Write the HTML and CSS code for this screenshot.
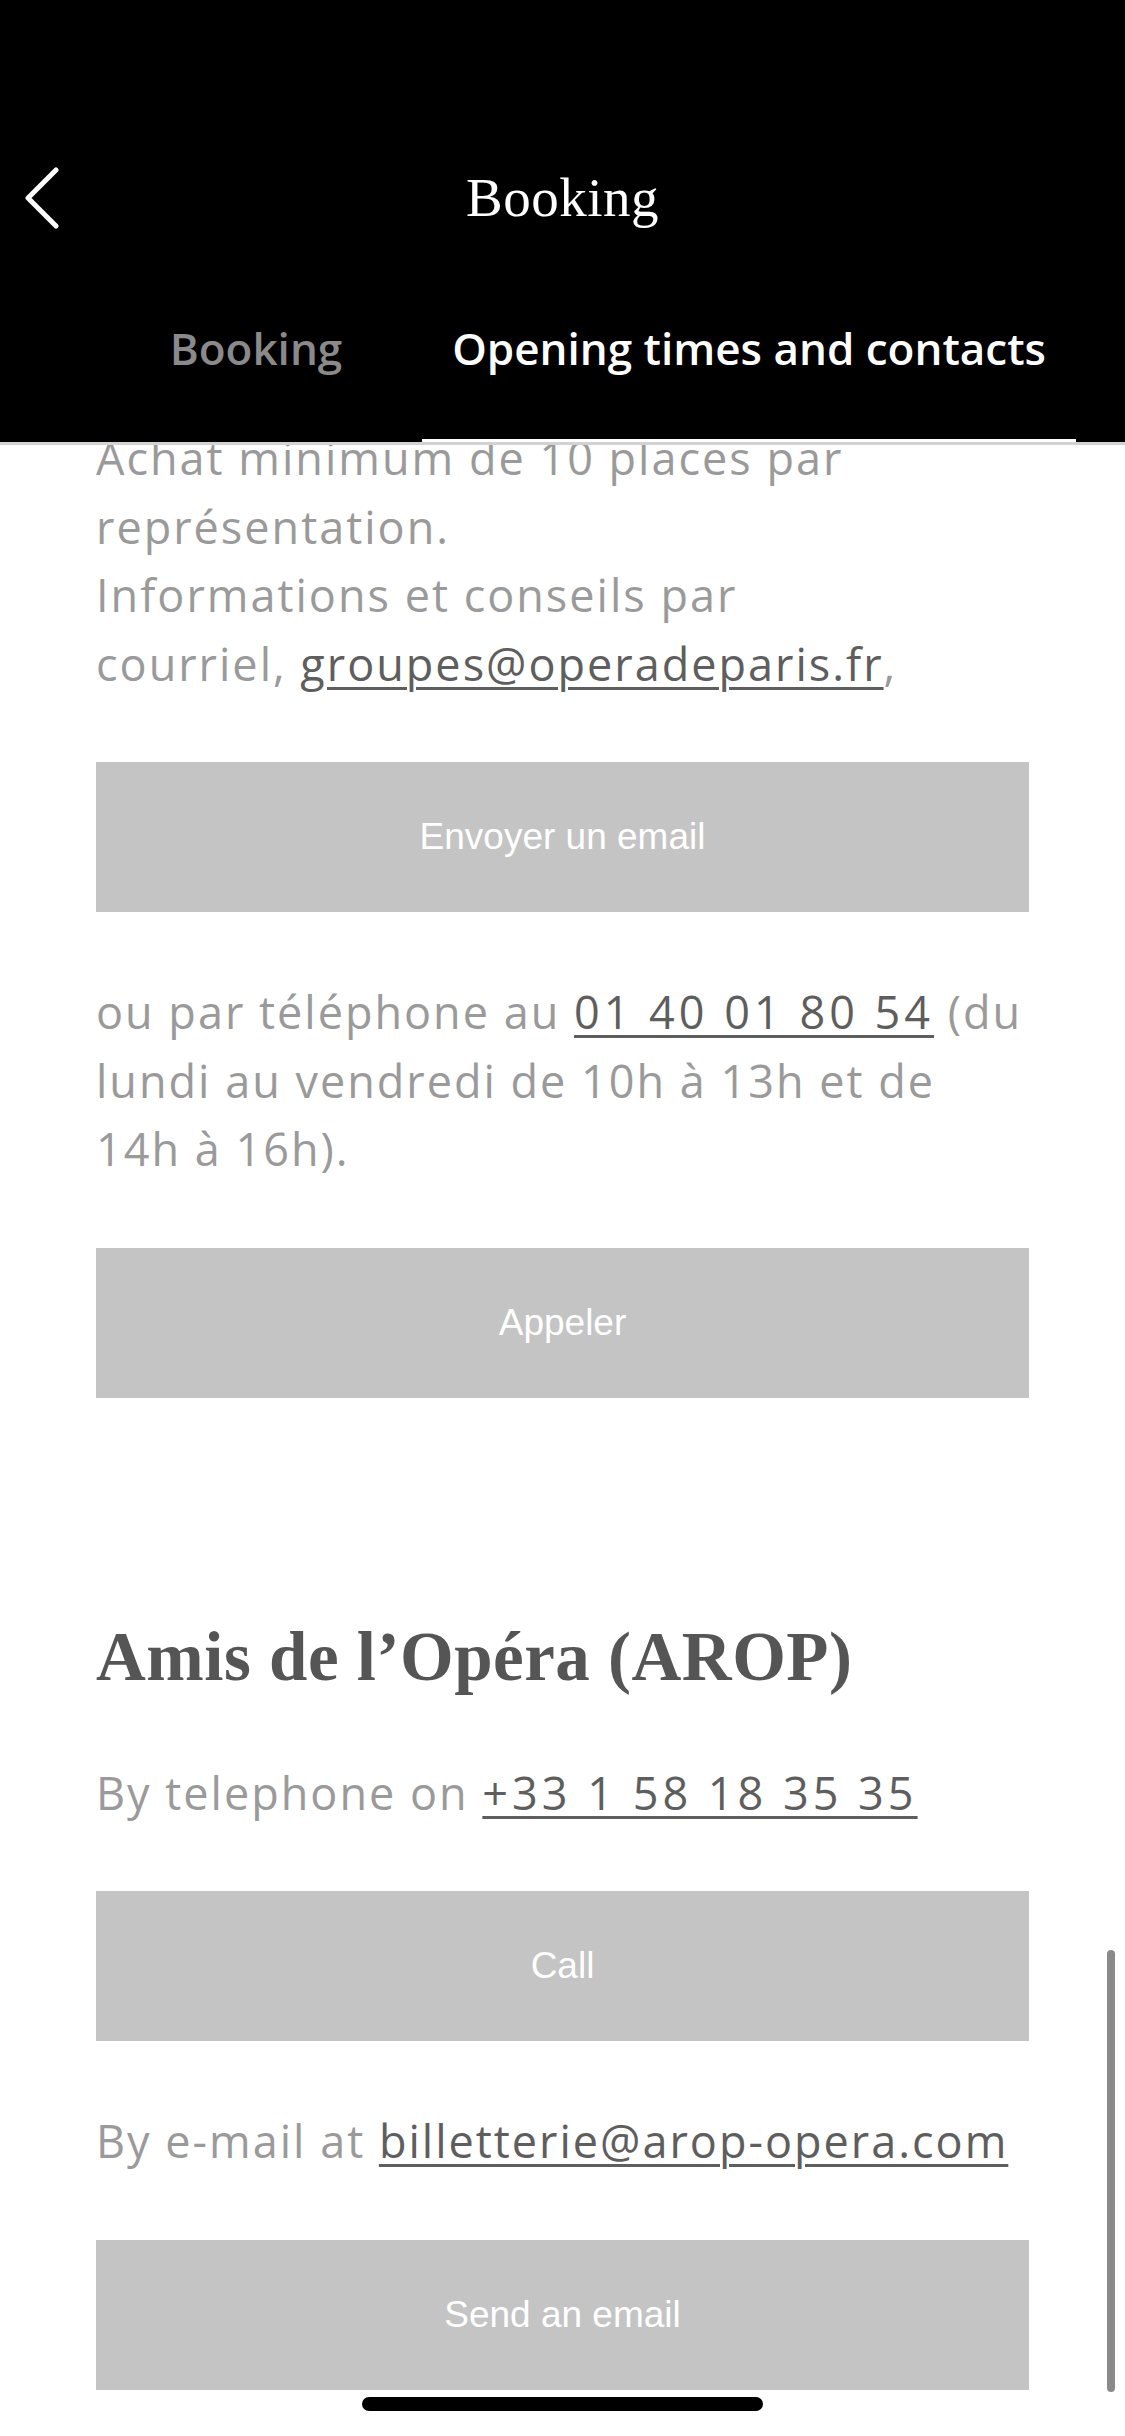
FILE: index.html
```html
<!DOCTYPE html>
<html lang="fr">
<head>
<meta charset="utf-8">
<title>Booking</title>
<link rel="stylesheet" href="styles.css">
</head>
<body>
<div class="screen">
  <header class="header">
    <div class="statusbar"></div>
    <nav class="navbar">
      <a class="back" href="#" aria-label="Back">
        <svg width="40" height="64" viewBox="0 0 40 64" aria-hidden="true">
          <polyline points="31,4 3,32 31,60" fill="none" stroke="#fff" stroke-width="5" stroke-linecap="round" stroke-linejoin="round"/>
        </svg>
      </a>
      <h1 class="title">Booking</h1>
    </nav>
    <div class="tabs">
      <div class="tab">Booking</div>
      <div class="tab tab-active">Opening times and contacts</div>
    </div>
  </header>
  <main class="scroll">
    <div class="content">
      <p class="text">Achat minimum de 10 places par représentation.<br>Informations et conseils par courriel,&nbsp;<a class="link" href="#">groupes@operadeparis.fr</a>,</p>
      <button class="btn">Envoyer un email</button>
      <p class="text">ou par téléphone au <a class="link link-phone" href="#">01&nbsp;40 01 80 54</a> (du lundi au vendredi de 10h à 13h et de 14h à 16h).</p>
      <button class="btn">Appeler</button>
      <h2 class="section-title">Amis de l’Opéra (AROP)</h2>
      <p class="text">By telephone on <a class="link link-phone" href="#">+33 1 58 18 35 35</a></p>
      <button class="btn">Call</button>
      <p class="text">By e-mail at <a class="link" href="#">billetterie@arop-opera.com</a></p>
      <button class="btn">Send an email</button>
    </div>
  </main>
  <div class="scrollbar"></div>
  <div class="home-indicator"></div>
</div>
</body>
</html>
```
FILE: styles.css
```css
html, body {
  margin: 0;
  padding: 0;
  background: #fff;
}

.screen {
  position: relative;
  width: 1125px;
  height: 2436px;
  overflow: hidden;
  display: flex;
  flex-direction: column;
  background: #fff;
}

.header {
  background: #000;
  height: 442px;
  display: flex;
  flex-direction: column;
  flex-shrink: 0;
}

.statusbar {
  height: 130px;
}

.navbar {
  position: relative;
  height: 136px;
  display: flex;
  align-items: center;
  justify-content: center;
}

.back {
  position: absolute;
  left: 25px;
  top: 36px;
  display: block;
  width: 40px;
  height: 64px;
}

.back svg {
  display: block;
}

.title {
  margin: 0;
  font-family: "Liberation Serif", "Times New Roman", serif;
  font-weight: 400;
  font-size: 55px;
  line-height: 64px;
  color: #fff;
  letter-spacing: 0.5px;
}

.tabs {
  flex: 1;
  display: flex;
  align-items: flex-end;
  justify-content: flex-end;
  gap: 50px;
  padding-right: 49px;
}

.tab {
  font-family: "Open Sans", "Noto Sans", sans-serif;
  font-weight: 600;
  font-size: 44px;
  line-height: 60px;
  color: #8a8a8a;
  padding: 0 30px 61px;
  border-bottom: 3px solid transparent;
  white-space: nowrap;
}

.tab-active {
  color: #fff;
  border-bottom-color: #fff;
}

.scroll {
  flex: 1;
  overflow: hidden;
  border-top: 3px solid #d2d2d2;
}

.content {
  padding: 0 96px;
  margin-top: -21px;
}

.text {
  margin: 0;
  font-family: "Open Sans", "Noto Sans", sans-serif;
  font-weight: 400;
  font-size: 45px;
  line-height: 68.5px;
  letter-spacing: 2px;
  color: #9a9a9a;
}

.link {
  color: #5e5e5e;
  text-decoration: underline;
  text-decoration-thickness: 3px;
  text-underline-offset: 6px;
}

.link-phone {
  letter-spacing: 4px;
}

.btn {
  display: flex;
  align-items: center;
  justify-content: center;
  width: 100%;
  height: 150px;
  margin: 64px 0 66px;
  padding: 0;
  border: none;
  background: #c4c4c4;
  color: #fff;
  font-family: "Liberation Sans", Arial, sans-serif;
  font-size: 37px;
  font-weight: 400;
}

.section-title {
  margin: 219px 0 62px;
  font-family: "Liberation Serif", "Times New Roman", serif;
  font-weight: 700;
  font-size: 69px;
  line-height: 80px;
  color: #555;
  letter-spacing: 0.5px;
}

.scrollbar {
  position: absolute;
  left: 1107px;
  top: 1950px;
  width: 8px;
  height: 442px;
  border-radius: 4px;
  background: #8a8a8a;
}

.home-indicator {
  position: absolute;
  left: 362px;
  top: 2397px;
  width: 401px;
  height: 14px;
  border-radius: 7px;
  background: #000;
}
```
